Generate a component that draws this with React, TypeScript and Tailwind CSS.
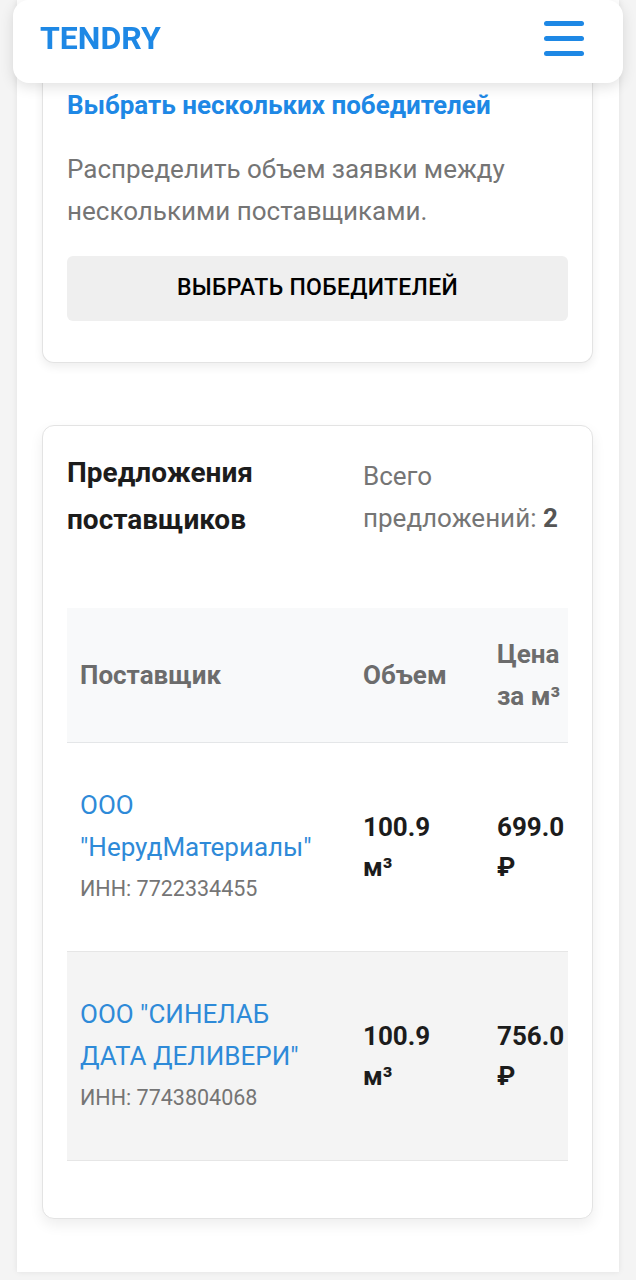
import React from 'react';

const font = { fontFamily: 'Roboto, "Noto Sans", sans-serif' };

const offers = [
  { name: 'ООО "НерудМатериалы"', inn: '7722334455', volume: '100.9', price: '699.0', striped: false },
  { name: 'ООО "СИНЕЛАБ ДАТА ДЕЛИВЕРИ"', inn: '7743804068', volume: '100.9', price: '756.0', striped: true },
];

const Header: React.FC = () => (
  <header className="fixed top-0 left-[13px] right-[13px] z-10 h-[83px] bg-white rounded-2xl shadow-[0_4px_14px_rgba(0,0,0,0.12)] flex items-center justify-between pl-[27px] pr-[39px] pb-[7px]">
    <span className="text-[32px] font-bold text-[#1e88e5]">TENDRY</span>
    <button className="flex flex-col gap-[10px] w-[40px]" aria-label="menu">
      <span className="block h-[5px] rounded-full bg-[#1e88e5]" />
      <span className="block h-[5px] rounded-full bg-[#1e88e5]" />
      <span className="block h-[5px] rounded-full bg-[#1e88e5]" />
    </button>
  </header>
);

const App: React.FC = () => {
  return (
    <div className="min-h-[1280px] bg-[#f4f4f4]" style={font}>
      <Header />
      <main className="mx-[17px] bg-white shadow-[0_0_6px_rgba(0,0,0,0.08)] pl-[25px] pr-[26px] pb-[53px]">
        <section className="bg-white border border-[#e3e3e3] border-t-0 rounded-b-xl shadow-[0_4px_10px_rgba(0,0,0,0.07)] px-[24px] pt-[88px] pb-[41px]">
          <h3 className="text-[26px] leading-[34px] font-bold text-[#1e88e5]">Выбрать нескольких победителей</h3>
          <p className="mt-[26px] text-[26px] leading-[42px] text-[#757575]">
            Распределить объем заявки между несколькими поставщиками.
          </p>
          <button className="mt-[24px] w-full h-[65px] rounded-md bg-[#efefef] text-[23px] font-medium text-black tracking-[0.3px]">
            ВЫБРАТЬ ПОБЕДИТЕЛЕЙ
          </button>
        </section>

        <section className="mt-[62px] bg-white border border-[#e3e3e3] rounded-xl shadow-[0_6px_14px_rgba(0,0,0,0.07)] px-[24px] pt-[23px] pb-[57px]">
          <div className="flex justify-between">
            <h2 className="w-[260px] text-[28px] leading-[47px] font-bold text-[#1c1c1c]">Предложения поставщиков</h2>
            <p className="w-[205px] pt-[6px] text-[26px] leading-[42px] text-[#757575]">
              Всего предложений: <span className="font-bold text-[#555]">2</span>
            </p>
          </div>

          <div className="mt-[65px] overflow-x-auto">
            <table className="w-full table-fixed border-collapse text-left">
              <thead>
                <tr className="bg-[#f8f9fa] border-b border-[#e4e6e8]">
                  <th className="w-[283px] px-[13px] py-[25px] text-[26px] leading-[42px] font-bold text-[#6c6c6c] align-middle">Поставщик</th>
                  <th className="w-[134px] px-[13px] py-[25px] text-[26px] leading-[42px] font-bold text-[#6c6c6c] align-middle">Объем</th>
                  <th className="pl-[13px] pr-0 py-[25px] text-[26px] leading-[42px] font-bold text-[#6c6c6c] align-middle">Цена за м³</th>
                </tr>
              </thead>
              <tbody>
                {offers.map((o) => (
                  <tr key={o.inn} className={`border-b border-[#e6e6e6] ${o.striped ? 'bg-[#f4f4f4]' : 'bg-white'}`}>
                    <td className="px-[13px] py-[41px] align-middle">
                      <a className="block text-[26px] leading-[42px] text-[#2e8ad8]">{o.name}</a>
                      <div className="text-[21.5px] leading-[42px] text-[#757575]">ИНН: {o.inn}</div>
                    </td>
                    <td className="pl-[13px] pr-[30px] py-[41px] align-middle text-[26px] leading-[40px] font-bold text-[#1c1c1c]">
                      {o.volume} м³
                    </td>
                    <td className="pl-[13px] pr-0 py-[41px] align-middle text-[26px] leading-[40px] font-bold text-[#1c1c1c]">
                      {o.price} ₽
                    </td>
                  </tr>
                ))}
              </tbody>
            </table>
          </div>
        </section>
      </main>
    </div>
  );
};

export default App;
